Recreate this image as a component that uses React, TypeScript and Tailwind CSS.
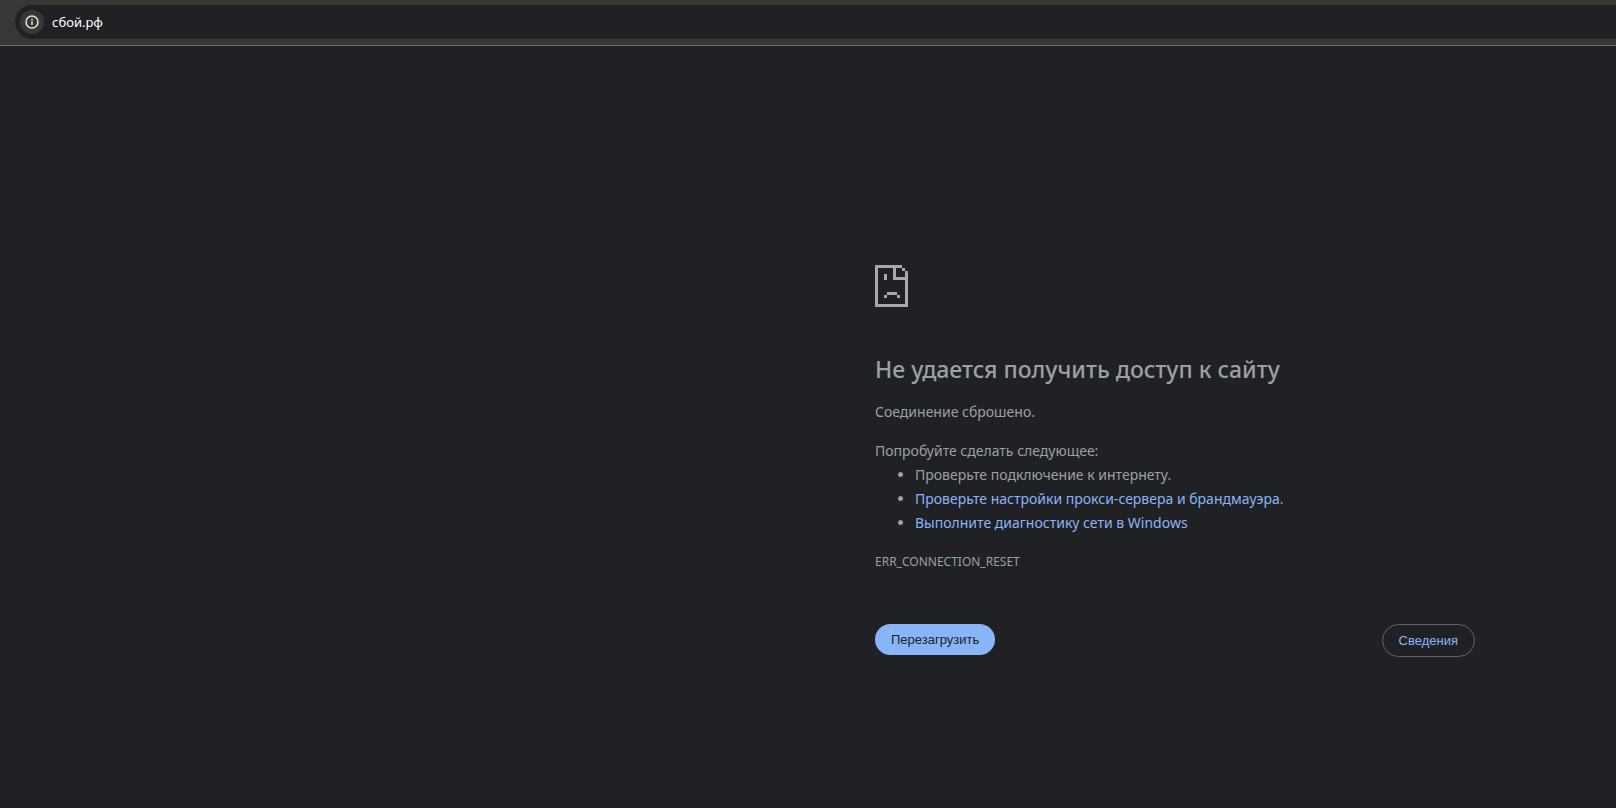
import { useState } from 'react';

const suggestions = [
  { text: 'Проверьте подключение к интернету', end: '.' },
  { text: 'Проверьте настройки прокси-сервера и брандмауэра', end: '.', href: '#proxy' },
  { text: 'Выполните диагностику сети в Windows', end: '', href: '#diagnose' },
];

function InfoIcon() {
  return (
    <svg className="size-4" viewBox="0 0 16 16" fill="none" aria-hidden="true">
      <circle cx="8" cy="8" r="6" stroke="#e3e3e3" strokeWidth="1.5" />
      <path d="M8 7.2V11" stroke="#e3e3e3" strokeWidth="1.5" />
      <path d="M8 4.8v1.5" stroke="#e3e3e3" strokeWidth="1.5" />
    </svg>
  );
}

// pixel-art page with a folded corner, 3px per dot
function SadPageIcon() {
  return (
    <svg className="h-[42px] w-[33px]" viewBox="0 0 33 42" fill="#a8a9ab" shapeRendering="crispEdges" aria-hidden="true">
      <path d="M0 0h27v3h-6v9h9V6h3v36H0zM3 3v36h27V15H18V3z" fillRule="evenodd" />
      <path d="M27 3h3v3h-3zM9 9h3v6H9zM12 27h10v3H12zM9 30h3v3H9zM22 30h3v3h-3z" />
    </svg>
  );
}

export default function App() {
  const [url, setUrl] = useState('сбой.рф');

  return (
    <div className="flex min-h-screen flex-col bg-[#202124] font-['Noto_Sans',sans-serif] text-[#9aa0a6]">
      <header className="border-b border-[#6b6b6b] bg-[#373737] pt-[5px] pb-1.5 pl-[15px]">
        <div className="flex h-[34px] items-center gap-2 rounded-l-full bg-[#202124] pl-[5px]">
          <button type="button" aria-label="Сведения о сайте" className="flex size-6 items-center justify-center rounded-full bg-[#373737]">
            <InfoIcon />
          </button>
          <input
            aria-label="Адресная строка"
            className="min-w-0 flex-1 bg-transparent pt-px text-[13px] text-white outline-none"
            value={url}
            onChange={(e) => setUrl(e.target.value)}
          />
        </div>
      </header>

      <main className="flex flex-1 justify-end pt-[219px] pr-[141px]">
        <div className="w-full max-w-[600px] text-sm leading-6">
          <SadPageIcon />
          <h1 className="mt-[47px] text-[23px] leading-[30px] font-medium">Не удается получить доступ к сайту</h1>
          <p className="mt-4">Соединение сброшено.</p>
          <p className="mt-[15px]">Попробуйте сделать следующее:</p>
          <ul className="list-disc pl-10">
            {suggestions.map(({ text, end, href }) => (
              <li key={text}>
                {href ? <a href={href} className="text-[#8ab4f8]">{text}</a> : text}
                {end}
              </li>
            ))}
          </ul>
          <p className="mt-[15px] text-xs leading-6">ERR_CONNECTION_RESET</p>
          <div className="mt-[50px] flex items-start justify-between font-['Liberation_Sans',sans-serif] text-[13px] leading-[15px]">
            <button type="button" className="rounded-full bg-[#8ab4f8] px-4 py-2 text-[#202124]">
              Перезагрузить
            </button>
            <button type="button" className="rounded-full border border-[#5f6368] px-4 py-2 text-[#8ab4f8]">
              Сведения
            </button>
          </div>
        </div>
      </main>
    </div>
  );
}
